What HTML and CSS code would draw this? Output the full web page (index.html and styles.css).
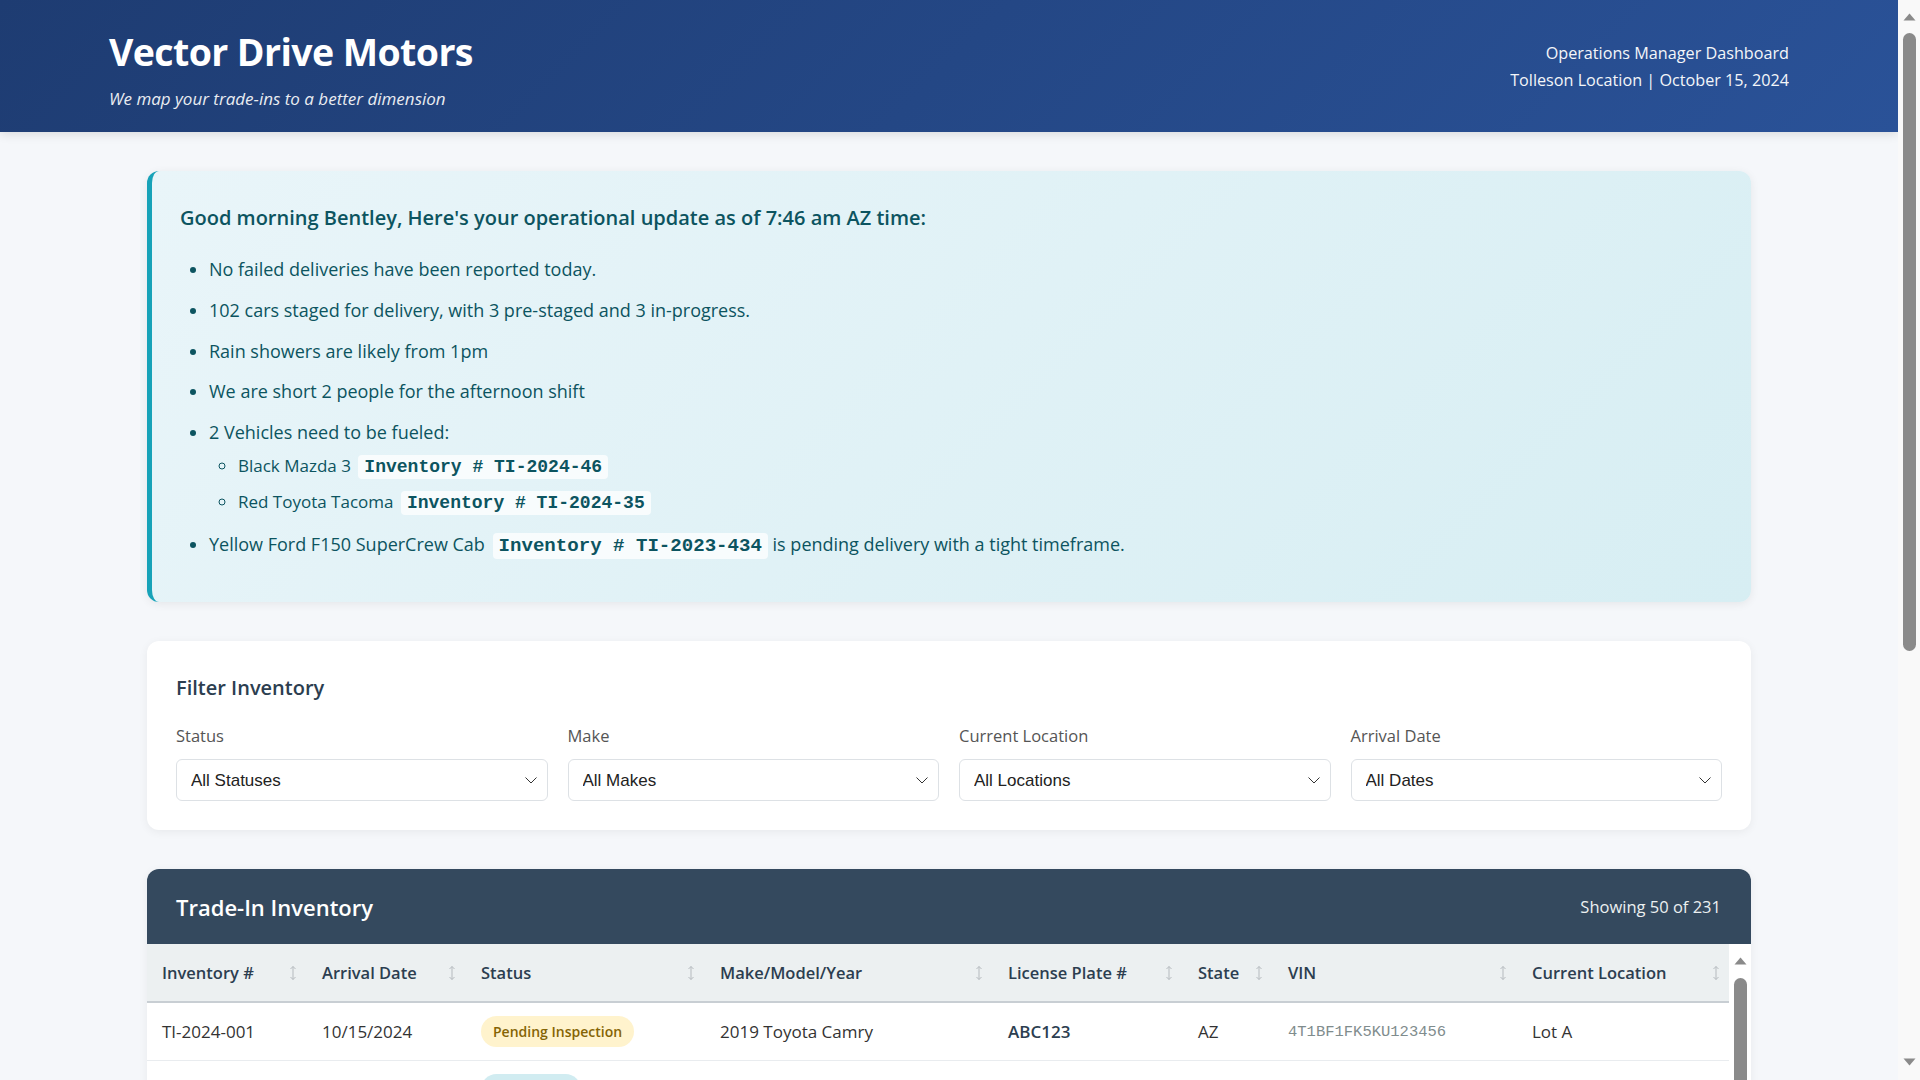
FILE: index.html
```html
<!DOCTYPE html>
<html lang="en">
<head>
<meta charset="utf-8">
<title>Vector Drive Motors - Operations Dashboard</title>
<link rel="stylesheet" href="styles.css">
</head>
<body>
<div class="page">
<header class="site-header">
  <div class="header-inner">
    <div class="brand">
      <h1 class="brand-title">Vector Drive Motors</h1>
      <p class="brand-tagline">We map your trade-ins to a better dimension</p>
    </div>
    <div class="header-meta">
      <div>Operations Manager Dashboard</div>
      <div>Tolleson Location | October 15, 2024</div>
    </div>
  </div>
</header>

<main class="container">
  <section class="update-card">
    <h2 class="update-title">Good morning Bentley, Here's your operational update as of 7:46 am AZ time:</h2>
    <ul class="update-list">
      <li>No failed deliveries have been reported today.</li>
      <li>102 cars staged for delivery, with 3 pre-staged and 3 in-progress.</li>
      <li>Rain showers are likely from 1pm</li>
      <li>We are short 2 people for the afternoon shift</li>
      <li>2 Vehicles need to be fueled:
        <ul class="sub-list">
          <li>Black Mazda 3 <code class="inv-code">Inventory # TI-2024-46</code></li>
          <li>Red Toyota Tacoma <code class="inv-code">Inventory # TI-2024-35</code></li>
        </ul>
      </li>
      <li>Yellow Ford F150 SuperCrew Cab <code class="inv-code">Inventory # TI-2023-434</code> is pending delivery with a tight timeframe.</li>
    </ul>
  </section>

  <section class="filter-card">
    <h3 class="filter-title">Filter Inventory</h3>
    <div class="filter-grid">
      <div class="filter-field">
        <label class="filter-label">Status</label>
        <div class="select-wrap">
          <select class="filter-select"><option>All Statuses</option></select>
          <svg class="chev" width="12" height="7" viewBox="0 0 12 7"><path d="M0.5 0.5L6 6L11.5 0.5" fill="none" stroke="#333" stroke-width="1"/></svg>
        </div>
      </div>
      <div class="filter-field">
        <label class="filter-label">Make</label>
        <div class="select-wrap">
          <select class="filter-select"><option>All Makes</option></select>
          <svg class="chev" width="12" height="7" viewBox="0 0 12 7"><path d="M0.5 0.5L6 6L11.5 0.5" fill="none" stroke="#333" stroke-width="1"/></svg>
        </div>
      </div>
      <div class="filter-field">
        <label class="filter-label">Current Location</label>
        <div class="select-wrap">
          <select class="filter-select"><option>All Locations</option></select>
          <svg class="chev" width="12" height="7" viewBox="0 0 12 7"><path d="M0.5 0.5L6 6L11.5 0.5" fill="none" stroke="#333" stroke-width="1"/></svg>
        </div>
      </div>
      <div class="filter-field">
        <label class="filter-label">Arrival Date</label>
        <div class="select-wrap">
          <select class="filter-select"><option>All Dates</option></select>
          <svg class="chev" width="12" height="7" viewBox="0 0 12 7"><path d="M0.5 0.5L6 6L11.5 0.5" fill="none" stroke="#333" stroke-width="1"/></svg>
        </div>
      </div>
    </div>
  </section>

  <section class="table-card">
    <div class="table-head">
      <h3 class="table-title">Trade-In Inventory</h3>
      <span class="table-count">Showing 50 of 231</span>
    </div>
    <div class="table-body">
      <div class="table-wrap">
        <table class="inv-table">
          <thead>
            <tr>
              <th class="c-inv">Inventory #<svg class="sort" width="8" height="16" viewBox="0 0 8 16"><path d="M4 1.5V14.5M1.5 4L4 1.5L6.5 4M1.5 12L4 14.5L6.5 12" fill="none" stroke="#b5babe" stroke-width="1"/></svg></th>
              <th class="c-date">Arrival Date<svg class="sort" width="8" height="16" viewBox="0 0 8 16"><path d="M4 1.5V14.5M1.5 4L4 1.5L6.5 4M1.5 12L4 14.5L6.5 12" fill="none" stroke="#b5babe" stroke-width="1"/></svg></th>
              <th class="c-status">Status<svg class="sort" width="8" height="16" viewBox="0 0 8 16"><path d="M4 1.5V14.5M1.5 4L4 1.5L6.5 4M1.5 12L4 14.5L6.5 12" fill="none" stroke="#b5babe" stroke-width="1"/></svg></th>
              <th class="c-make">Make/Model/Year<svg class="sort" width="8" height="16" viewBox="0 0 8 16"><path d="M4 1.5V14.5M1.5 4L4 1.5L6.5 4M1.5 12L4 14.5L6.5 12" fill="none" stroke="#b5babe" stroke-width="1"/></svg></th>
              <th class="c-plate">License Plate #<svg class="sort" width="8" height="16" viewBox="0 0 8 16"><path d="M4 1.5V14.5M1.5 4L4 1.5L6.5 4M1.5 12L4 14.5L6.5 12" fill="none" stroke="#b5babe" stroke-width="1"/></svg></th>
              <th class="c-state">State<svg class="sort" width="8" height="16" viewBox="0 0 8 16"><path d="M4 1.5V14.5M1.5 4L4 1.5L6.5 4M1.5 12L4 14.5L6.5 12" fill="none" stroke="#b5babe" stroke-width="1"/></svg></th>
              <th class="c-vin">VIN<svg class="sort" width="8" height="16" viewBox="0 0 8 16"><path d="M4 1.5V14.5M1.5 4L4 1.5L6.5 4M1.5 12L4 14.5L6.5 12" fill="none" stroke="#b5babe" stroke-width="1"/></svg></th>
              <th class="c-loc">Current Location<svg class="sort" width="8" height="16" viewBox="0 0 8 16"><path d="M4 1.5V14.5M1.5 4L4 1.5L6.5 4M1.5 12L4 14.5L6.5 12" fill="none" stroke="#b5babe" stroke-width="1"/></svg></th>
            </tr>
          </thead>
          <tbody>
            <tr><td>TI-2024-001</td><td>10/15/2024</td><td><span class="badge badge-pending">Pending Inspection</span></td><td>2019 Toyota Camry</td><td class="plate">ABC123</td><td>AZ</td><td class="vin">4T1BF1FK5KU123456</td><td>Lot A</td></tr>
            <tr><td>TI-2024-002</td><td>10/15/2024</td><td><span class="badge badge-progress">In Progress</span></td><td>2020 Honda Accord</td><td class="plate">XYZ789</td><td>AZ</td><td class="vin">1HGCV1F34LA012345</td><td>Lot B</td></tr>
            <tr><td>TI-2024-003</td><td>10/14/2024</td><td><span class="badge badge-ready">Ready</span></td><td>2018 Ford Escape</td><td class="plate">DEF456</td><td>AZ</td><td class="vin">1FMCU0GD5JUA23456</td><td>Lot A</td></tr>
            <tr><td>TI-2024-004</td><td>10/14/2024</td><td><span class="badge badge-pending">Pending Inspection</span></td><td>2021 Chevrolet Malibu</td><td class="plate">GHJ321</td><td>CA</td><td class="vin">1G1ZD5ST1MF034567</td><td>Service Bay</td></tr>
            <tr><td>TI-2024-005</td><td>10/13/2024</td><td><span class="badge badge-progress">In Progress</span></td><td>2017 Nissan Altima</td><td class="plate">KLM654</td><td>AZ</td><td class="vin">1N4AL3AP8HC045678</td><td>Lot C</td></tr>
            <tr><td>TI-2024-006</td><td>10/13/2024</td><td><span class="badge badge-ready">Ready</span></td><td>2022 Hyundai Tucson</td><td class="plate">NPQ987</td><td>NM</td><td class="vin">5NMJB3AE0NH056789</td><td>Lot B</td></tr>
          </tbody>
        </table>
      </div>
      <div class="inner-scrollbar">
        <div class="sb-btn sb-btn-inner"><svg width="13" height="8" viewBox="0 0 13 8"><path d="M6.5 0.5L12.5 7.5H0.5Z" fill="#8a8a8a"/></svg></div>
        <div class="sb-thumb sb-thumb-inner"></div>
      </div>
    </div>
  </section>
</main>
</div>

<div class="page-scrollbar">
  <div class="sb-btn sb-btn-top"><svg width="13" height="8" viewBox="0 0 13 8"><path d="M6.5 0.5L12.5 7.5H0.5Z" fill="#8a8a8a"/></svg></div>
  <div class="sb-thumb sb-thumb-page"></div>
  <div class="sb-spacer"></div>
  <div class="sb-btn sb-btn-bottom"><svg width="13" height="8" viewBox="0 0 13 8"><path d="M0.5 0.5H12.5L6.5 7.5Z" fill="#8a8a8a"/></svg></div>
</div>
</body>
</html>
```

FILE: styles.css
```css
* { box-sizing: border-box; }

html { background: #f5f7fa; }

body {
  margin: 0;
  font-family: "Open Sans", "Noto Sans", sans-serif;
  color: #333;
  background: #f5f7fa;
  height: 100vh;
  overflow: hidden;
}

.page {
  margin-right: 22px;
}

/* Fake scrollbars (drawn) */
.page-scrollbar {
  position: fixed;
  top: 0;
  right: 0;
  width: 22px;
  height: 100vh;
  background: #f9f9f9;
  display: flex;
  flex-direction: column;
  align-items: center;
}
.sb-btn {
  width: 22px;
  display: flex;
  align-items: center;
  justify-content: center;
  flex: none;
}
.sb-btn-top { height: 33px; }
.sb-btn-bottom { height: 36px; }
.sb-thumb {
  width: 13px;
  border-radius: 7px;
  background: #8a8a8a;
  flex: none;
}
.sb-thumb-page { height: 618px; }
.sb-spacer { flex: 1; }

/* Header */
.site-header {
  background: linear-gradient(135deg, #1e3c72 0%, #2a5298 100%);
  color: #fff;
  box-shadow: 0 2px 10px rgba(0, 0, 0, 0.12);
}
.header-inner {
  max-width: 1680px;
  margin: 0 auto;
  height: 132px;
  display: flex;
  align-items: center;
  justify-content: space-between;
}
.brand {
  display: flex;
  flex-direction: column;
  gap: 12px;
  margin-top: 9px;
}
.brand-title {
  margin: 0;
  font-size: 37.5px;
  font-weight: 700;
  line-height: 1.2;
  letter-spacing: -0.6px;
}
.brand-tagline {
  margin: 0;
  font-size: 17px;
  font-style: italic;
  line-height: 1.5;
  opacity: 0.9;
}
.header-meta {
  text-align: right;
  font-size: 16.2px;
  line-height: 27px;
  padding-top: 2px;
  opacity: 0.95;
}

/* Main */
.container {
  max-width: 1604px;
  margin: 0 auto;
  padding: 39px 0 40px;
  display: flex;
  flex-direction: column;
  gap: 39px;
}

.update-card {
  background: linear-gradient(135deg, #e9f5f9 0%, #d7eef3 100%);
  border-left: 5px solid #17a2b8;
  border-radius: 12px;
  padding: 33px 32px 29px 28px;
  color: #0c5460;
  box-shadow: 0 2px 10px rgba(0, 0, 0, 0.07);
}
.update-title {
  margin: 0 0 24px;
  font-size: 20px;
  font-weight: 600;
  line-height: 1.35;
}
.update-list {
  margin: 0;
  padding-left: 29px;
  font-size: 18px;
  line-height: 1.6;
}
.update-list > li { margin-bottom: 12px; }
.sub-list {
  list-style: circle;
  margin: 5px 0 0;
  padding-left: 29px;
  font-size: 17px;
}
.sub-list > li { margin-bottom: 6px; }
.inv-code {
  font-family: "Liberation Mono", "Courier New", monospace;
  font-weight: 700;
  font-size: 1.06em;
  background: rgba(255, 255, 255, 0.75);
  padding: 2px 6px;
  border-radius: 4px;
  color: #0c5460;
  margin-left: 3px;
}

/* Filter card */
.filter-card {
  background: #fff;
  border-radius: 12px;
  padding: 32px 29px 29px;
  box-shadow: 0 2px 10px rgba(0, 0, 0, 0.06);
}
.filter-title {
  margin: 0 0 21px;
  font-size: 20px;
  font-weight: 600;
  line-height: 1.5;
  color: #2c3e50;
}
.filter-grid {
  display: grid;
  grid-template-columns: repeat(4, 1fr);
  gap: 20px;
}
.filter-label {
  display: block;
  font-size: 16.5px;
  line-height: 24px;
  color: #555;
  margin-bottom: 11px;
}
.select-wrap { position: relative; }
.filter-select {
  appearance: none;
  -webkit-appearance: none;
  width: 100%;
  height: 42px;
  border: 1px solid #dde1e5;
  border-radius: 6px;
  background: #fff;
  padding: 0 14px;
  font-family: "Liberation Sans", Arial, sans-serif;
  font-size: 17px;
  color: #222;
}
.chev {
  position: absolute;
  right: 11px;
  top: 18px;
  pointer-events: none;
}

/* Table card */
.table-card {
  background: #fff;
  border-radius: 12px;
  overflow: hidden;
  box-shadow: 0 2px 10px rgba(0, 0, 0, 0.06);
}
.table-head {
  background: #34495e;
  color: #fff;
  height: 75px;
  padding: 0 30px 0 29px;
  display: flex;
  align-items: center;
  justify-content: space-between;
}
.table-title {
  margin: 0;
  font-size: 22px;
  font-weight: 600;
}
.table-count {
  font-size: 16.5px;
  color: #ecf0f1;
}
.table-body {
  display: flex;
  max-height: 845px;
}
.table-wrap {
  flex: 1;
  min-width: 0;
  overflow: hidden;
}
.inner-scrollbar {
  width: 22px;
  flex: none;
  background: #fff;
  display: flex;
  flex-direction: column;
  align-items: center;
}
.sb-btn-inner { height: 34px; }
.sb-thumb-inner { height: 420px; }

.inv-table {
  width: 100%;
  border-collapse: collapse;
  table-layout: fixed;
  font-size: 17px;
}
.inv-table th {
  position: relative;
  background: #ecf0f1;
  color: #2c3e50;
  font-size: 16.5px;
  font-weight: 600;
  text-align: left;
  padding: 15px 15px;
  height: 58px;
  border-bottom: 2px solid #c8ced3;
  white-space: nowrap;
}
.inv-table th .sort {
  position: absolute;
  right: 10px;
  top: 21px;
}
.c-inv { width: 160px; }
.c-date { width: 159px; }
.c-status { width: 239px; }
.c-make { width: 288px; }
.c-plate { width: 190px; }
.c-state { width: 90px; }
.c-vin { width: 244px; }
.c-loc { width: 213px; }

.inv-table td {
  padding: 13px 15px;
  height: 57px;
  border-bottom: 1px solid #e9ecef;
  color: #333;
  white-space: nowrap;
}
.inv-table td.plate { font-weight: 600; color: #2c3e50; }
.inv-table td.vin {
  font-family: "Liberation Mono", "Courier New", monospace;
  font-size: 15.5px;
  color: #7f8c8d;
}
.badge {
  display: inline-block;
  padding: 3px 12px;
  border-radius: 16px;
  font-size: 14px;
  font-weight: 600;
  line-height: 25px;
}
.badge-pending { background: #fff3cd; color: #856404; }
.badge-progress { background: #d1ecf1; color: #0c5460; }
.badge-ready { background: #d4edda; color: #155724; }
```
